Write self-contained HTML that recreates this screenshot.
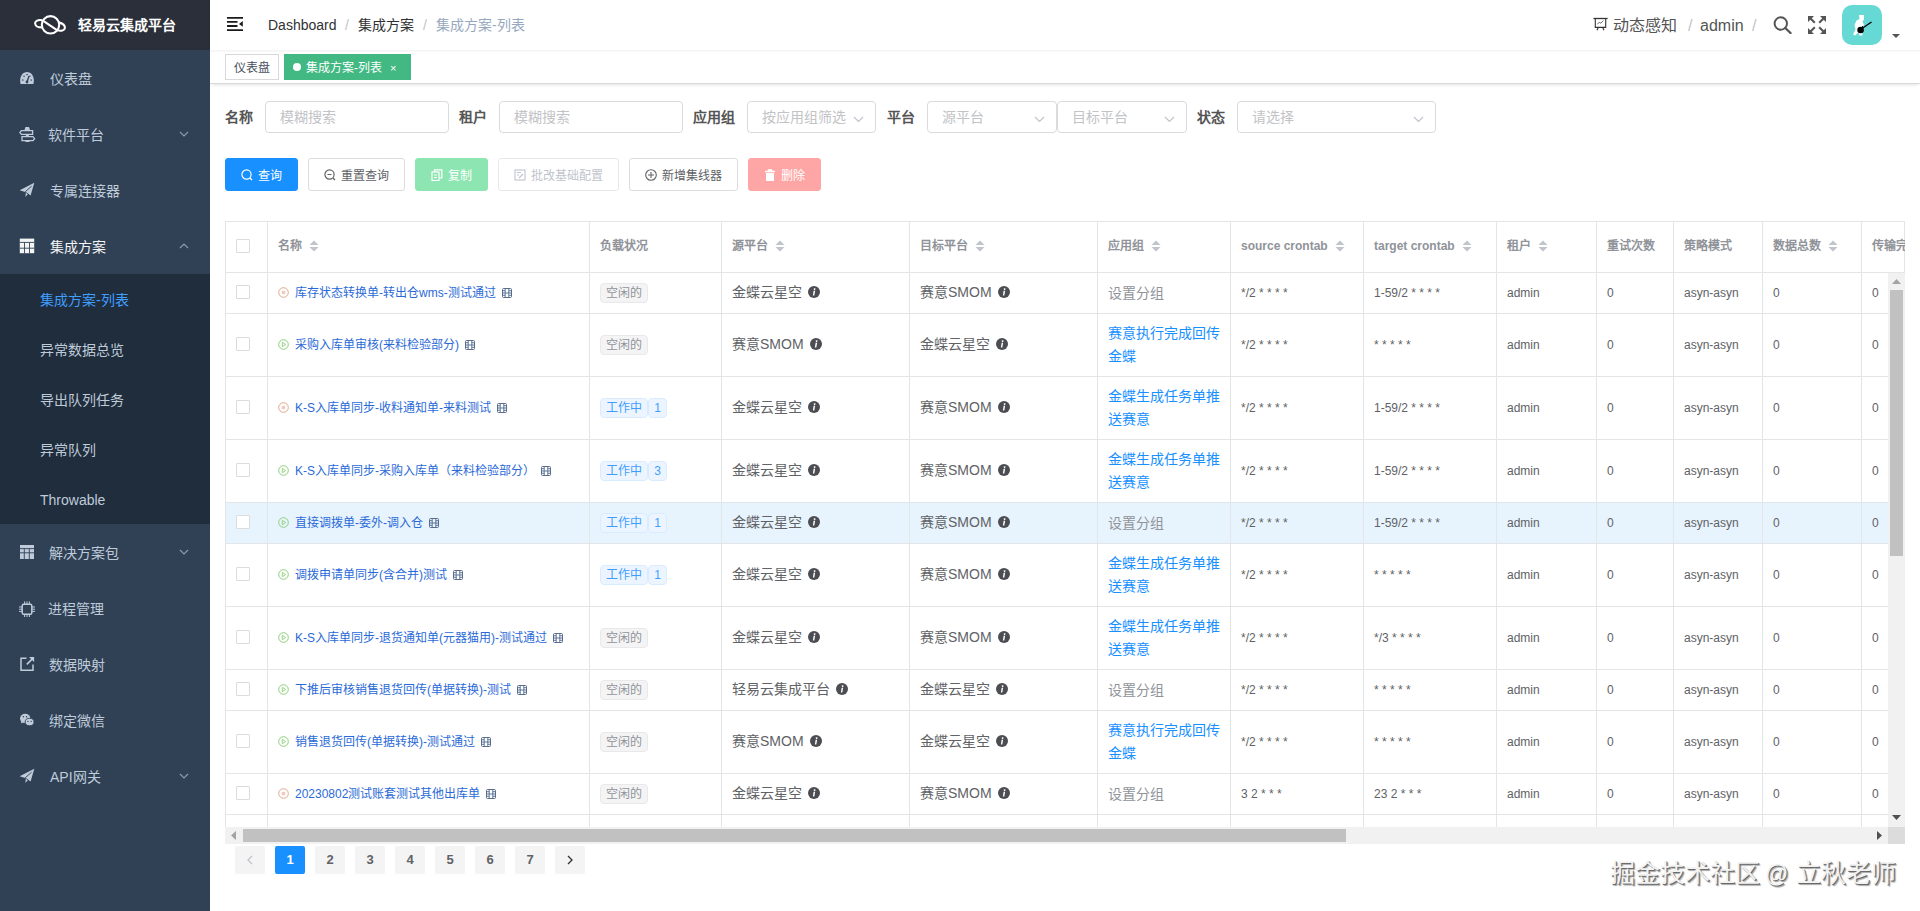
<!DOCTYPE html><html lang="zh-CN"><head><meta charset="utf-8"><title>集成方案-列表</title><style>
*{box-sizing:border-box;margin:0;padding:0}
html,body{width:1920px;height:911px;overflow:hidden;background:#fff;font-family:"Liberation Sans", sans-serif;}
.ab{position:absolute;white-space:nowrap}
.t{position:absolute;white-space:nowrap;line-height:20px;height:20px}
svg{display:block}
</style></head><body>
<div class="ab" style="left:0;top:0;width:210px;height:911px;background:#304156"></div>
<div class="ab" style="left:0;top:0;width:210px;height:50px;background:#2b2f3a"></div>
<svg class="ab" style="left:33px;top:13px" width="34" height="24" viewBox="0 0 34 24">
<circle cx="17.5" cy="11.8" r="8.7" fill="none" stroke="#fff" stroke-width="2.1"/>
<path d="M9.5 7.3 C5 6.3 1.9 8 2.1 10.5 C2.3 13 5.5 14.6 9.6 14.3 M25.4 9.4 C29.6 10.3 32.1 12.5 31.9 15 C31.7 17.6 28 18.3 24.4 17.3 M10.6 8.1 L24.4 17.4" fill="none" stroke="#fff" stroke-width="2.1"/>
</svg>
<div class="t" style="left:78px;top:15px;font-size:14px;font-weight:bold;color:#fff">轻易云集成平台</div>
<div class="ab" style="left:0;top:274px;width:210px;height:250px;background:#1f2d3d"></div>
<svg class="ab" style="left:19px;top:70px;overflow:visible" width="16" height="16" viewBox="0 0 16 16"><path d="M1.6 14 C0.4 9.5 1.5 2.2 8 2 C14.5 2.2 15.6 9.5 14.4 14 Z" fill="#bfcbd9"/><path d="M8 12.2 L10 6" stroke="#304156" stroke-width="1.3"/><circle cx="8" cy="12" r="1.4" fill="#304156"/><rect x="7.3" y="4" width="1.4" height="1.2" fill="#304156"/><rect x="3" y="9.5" width="1.5" height="1.1" fill="#304156"/><rect x="11.5" y="9.5" width="1.5" height="1.1" fill="#304156"/><rect x="4.5" y="5.6" width="1.1" height="1.4" fill="#304156"/><rect x="10.4" y="5.6" width="1.1" height="1.4" fill="#304156"/></svg>
<div class="t" style="left:50px;top:69px;font-size:14px;color:#bfcbd9">仪表盘</div>
<svg class="ab" style="left:19px;top:126px;overflow:visible" width="16" height="16" viewBox="0 0 16 16"><path d="M2.4 4.6 H13.6 V8.4 H2.4 L0.9 6.5 Z" fill="none" stroke="#bfcbd9" stroke-width="1.3"/><path d="M3 10.6 H14 L15.6 12.7 L14 14.7 H3 Z" fill="none" stroke="#bfcbd9" stroke-width="1.3"/><path d="M6.5 1 H10 L11 4 H5.5Z M6 14.8 H11 L10.2 16 H6.8Z" fill="#bfcbd9"/><rect x="6.8" y="8.4" width="3" height="2.2" fill="#bfcbd9"/></svg>
<div class="t" style="left:48px;top:125px;font-size:14px;color:#bfcbd9">软件平台</div>
<svg class="ab" style="left:179px;top:131px" width="10" height="6" viewBox="0 0 10 6"><path d="M1 1 L5 5 L9 1" fill="none" stroke="#8e99a9" stroke-width="1.2"/></svg>
<svg class="ab" style="left:19px;top:182px;overflow:visible" width="16" height="16" viewBox="0 0 16 16"><path d="M0.7 8.3 L15.3 0.8 L11.6 13.4 L7.6 10.6 Z" fill="#bfcbd9"/><path d="M6.8 10.8 L6.4 15 L8.8 12.2 Z" fill="#bfcbd9"/><path d="M6.2 9.8 L12.6 4.2" stroke="#304156" stroke-width="0.9"/></svg>
<div class="t" style="left:50px;top:181px;font-size:14px;color:#bfcbd9">专属连接器</div>
<svg class="ab" style="left:19px;top:238px;overflow:visible" width="16" height="16" viewBox="0 0 16 16"><rect x="0.8" y="0.6" width="14.4" height="14.6" fill="#f4f4f5"/><path d="M0.8 4.4 H15.2 M0.8 10.2 H15.2 M5.5 4.4 V15.2 M10.5 4.4 V15.2" stroke="#304156" stroke-width="0.9"/></svg>
<div class="t" style="left:50px;top:237px;font-size:14px;color:#f4f4f5">集成方案</div>
<svg class="ab" style="left:179px;top:243px" width="10" height="6" viewBox="0 0 10 6"><path d="M1 5 L5 1 L9 5" fill="none" stroke="#8e99a9" stroke-width="1.2"/></svg>
<svg class="ab" style="left:19px;top:544px;overflow:visible" width="16" height="16" viewBox="0 0 16 16"><rect x="1" y="1" width="14" height="14" fill="#bfcbd9"/><path d="M1 4.6 H15 M1 8.8 H15 M5.3 4.6 V15 M10.3 4.6 V15" stroke="#304156" stroke-width="0.9"/></svg>
<div class="t" style="left:49px;top:543px;font-size:14px;color:#bfcbd9">解决方案包</div>
<svg class="ab" style="left:179px;top:549px" width="10" height="6" viewBox="0 0 10 6"><path d="M1 1 L5 5 L9 1" fill="none" stroke="#8e99a9" stroke-width="1.2"/></svg>
<svg class="ab" style="left:19px;top:600px;overflow:visible" width="16" height="16" viewBox="0 0 16 16"><rect x="3.2" y="4.2" width="9.6" height="10" rx="1.5" fill="none" stroke="#bfcbd9" stroke-width="1.5"/><path d="M5.6 1.4V4 M8 1.4V4 M10.4 1.4V4 M5.6 14.4V17 M8 14.4V17 M10.4 14.4V17 M0 7H3 M0 9.2H3 M0 11.4H3 M13 7H16 M13 9.2H16 M13 11.4H16" stroke="#bfcbd9" stroke-width="1"/></svg>
<div class="t" style="left:48px;top:599px;font-size:14px;color:#bfcbd9">进程管理</div>
<svg class="ab" style="left:19px;top:656px;overflow:visible" width="16" height="16" viewBox="0 0 16 16"><path d="M7.5 2.2 H2 V14.2 H14 V8.5" fill="none" stroke="#bfcbd9" stroke-width="1.5"/><path d="M7.8 8.4 L13.8 2.4" stroke="#bfcbd9" stroke-width="1.6"/><path d="M10 1 H15.1 V6.1 Z" fill="#bfcbd9"/></svg>
<div class="t" style="left:49px;top:655px;font-size:14px;color:#bfcbd9">数据映射</div>
<svg class="ab" style="left:19px;top:712px;overflow:visible" width="16" height="16" viewBox="0 0 16 16"><ellipse cx="6.2" cy="6.4" rx="5.2" ry="4.6" fill="#bfcbd9"/><path d="M2.5 9 L1.8 11.5 L5 10Z" fill="#bfcbd9"/><ellipse cx="10.6" cy="10" rx="4.4" ry="3.7" fill="#bfcbd9" stroke="#304156" stroke-width="0.9"/><circle cx="4.4" cy="4.8" r="0.8" fill="#304156"/><circle cx="7.6" cy="4.8" r="0.8" fill="#304156"/><circle cx="9" cy="9.4" r="0.6" fill="#304156"/><circle cx="12.2" cy="9.4" r="0.6" fill="#304156"/></svg>
<div class="t" style="left:49px;top:711px;font-size:14px;color:#bfcbd9">绑定微信</div>
<svg class="ab" style="left:19px;top:768px;overflow:visible" width="16" height="16" viewBox="0 0 16 16"><path d="M0.7 8.3 L15.3 0.8 L11.6 13.4 L7.6 10.6 Z" fill="#bfcbd9"/><path d="M6.8 10.8 L6.4 15 L8.8 12.2 Z" fill="#bfcbd9"/><path d="M6.2 9.8 L12.6 4.2" stroke="#304156" stroke-width="0.9"/></svg>
<div class="t" style="left:50px;top:767px;font-size:14px;color:#bfcbd9">API网关</div>
<svg class="ab" style="left:179px;top:773px" width="10" height="6" viewBox="0 0 10 6"><path d="M1 1 L5 5 L9 1" fill="none" stroke="#8e99a9" stroke-width="1.2"/></svg>
<div class="t" style="left:40px;top:290px;font-size:14px;color:#409eff">集成方案-列表</div>
<div class="t" style="left:40px;top:340px;font-size:14px;color:#bfcbd9">异常数据总览</div>
<div class="t" style="left:40px;top:390px;font-size:14px;color:#bfcbd9">导出队列任务</div>
<div class="t" style="left:40px;top:440px;font-size:14px;color:#bfcbd9">异常队列</div>
<div class="t" style="left:40px;top:490px;font-size:14px;color:#bfcbd9">Throwable</div>
<div class="ab" style="left:210px;top:0;width:1710px;height:50px;background:#fff;box-shadow:0 1px 4px rgba(0,21,41,.08)"></div>
<svg class="ab" style="left:227px;top:17px" width="16" height="14" viewBox="0 0 16 14">
<path d="M0 0.9H15.8 M0.3 4.9H9.8 M0.3 9H9.8 M0 13.1H15.8" stroke="#1b1b1d" stroke-width="1.8" stroke-linecap="round"/><path d="M15.8 3.9 L12 6.9 L15.8 9.8 Z" fill="#1b1b1d"/></svg>
<div class="t" style="left:268px;top:15px;font-size:14px;color:#303133">Dashboard</div>
<div class="t" style="left:345px;top:15px;font-size:14px;color:#c0c4cc">/</div>
<div class="t" style="left:358px;top:15px;font-size:14px;color:#303133">集成方案</div>
<div class="t" style="left:423px;top:15px;font-size:14px;color:#c0c4cc">/</div>
<div class="t" style="left:436px;top:15px;font-size:14px;color:#97a8be">集成方案-列表</div>
<svg class="ab" style="left:1593px;top:17px" width="15" height="14" viewBox="0 0 15 14">
<path d="M0.4 1.5 H14.6" stroke="#333" stroke-width="1.3"/><path d="M2.3 1.5 V10.4 H12.7 V1.5" fill="none" stroke="#333" stroke-width="1.1"/><path d="M4.3 7 L6.3 5.4 L7.8 6.2 L10.4 3.6" fill="none" stroke="#555" stroke-width="0.9"/><path d="M5.3 10.4 L4 13.2 M9.7 10.4 L11 13.2" stroke="#333" stroke-width="1.1"/></svg>
<div class="t" style="left:1613px;top:16px;font-size:16px;color:#555">动态感知</div>
<div class="t" style="left:1688px;top:16px;font-size:16px;color:#c0c4cc">/</div>
<div class="t" style="left:1700px;top:16px;font-size:16px;color:#555">admin</div>
<div class="t" style="left:1752px;top:16px;font-size:16px;color:#c0c4cc">/</div>
<svg class="ab" style="left:1773px;top:16px" width="19" height="18" viewBox="0 0 19 18">
<circle cx="7.8" cy="7.5" r="6.2" fill="none" stroke="#555" stroke-width="2"/><path d="M12.3 12 L17.5 17" stroke="#555" stroke-width="2.4" stroke-linecap="round"/></svg>
<svg class="ab" style="left:1808px;top:16px" width="18" height="18" viewBox="0 0 18 18">
<path d="M0 0H6L0 6Z M18 0H12L18 6Z M0 18H6L0 12Z M18 18H12L18 12Z" fill="#555"/><path d="M1.5 1.5L6.8 6.8 M16.5 1.5L11.2 6.8 M1.5 16.5L6.8 11.2 M16.5 16.5L11.2 11.2" stroke="#555" stroke-width="2.1"/></svg>
<div class="ab" style="left:1842px;top:5px;width:40px;height:40px;border-radius:10px;background:#66d9d4;overflow:hidden"><svg width="40" height="40" viewBox="0 0 40 40"><path d="M17 10 H22 V14.5 L20.5 16.5 L22 20 L19.5 22 L20.5 30.5 L17.5 30.5 L16.5 27 L13.5 30.5 L11 29.5 L13.5 24.5 L12.5 20 L14.5 15.5 L17.5 14 Z" fill="#fff"/><circle cx="18.6" cy="25" r="3.3" fill="#000"/><path d="M20 23.5 L29.5 17" stroke="#000" stroke-width="1.3"/><circle cx="20.5" cy="21.5" r="0.6" fill="#000"/></svg></div>
<svg class="ab" style="left:1892px;top:34px" width="8" height="4" viewBox="0 0 8 4"><path d="M0 0H8L4 4Z" fill="#555"/></svg>
<div class="ab" style="left:210px;top:50px;width:1710px;height:34px;background:#fff;border-bottom:1px solid #d9d9d9;box-shadow:0 3px 3px -2px rgba(0,0,0,.12)"></div>
<div class="ab" style="left:210px;top:50px;width:1710px;height:2px;background:linear-gradient(#f3f3f3,#fbfbfb)"></div>
<div class="ab" style="left:225px;top:54px;width:54px;height:26px;border:1px solid #d9d9d9;background:#fff"></div>
<div class="t" style="left:234px;top:58px;font-size:12px;color:#495060">仪表盘</div>
<div class="ab" style="left:284px;top:54px;width:127px;height:26px;background:#42b983;border:1px solid #42b983"></div>
<div class="ab" style="left:293px;top:63px;width:8px;height:8px;border-radius:50%;background:#fff"></div>
<div class="t" style="left:306px;top:58px;font-size:12px;color:#fff">集成方案-列表</div>
<div class="t" style="left:390px;top:58px;font-size:11px;color:#fff">×</div>
<div class="t" style="left:225px;top:107px;font-size:14px;font-weight:bold;color:#555">名称</div>
<div class="ab" style="left:265px;top:101px;width:184px;height:32px;border:1px solid #dadbdd;border-radius:4px;background:#fff"></div>
<div class="t" style="left:280px;top:107px;font-size:14px;color:#c2c3c6">模糊搜索</div>
<div class="t" style="left:459px;top:107px;font-size:14px;font-weight:bold;color:#555">租户</div>
<div class="ab" style="left:499px;top:101px;width:184px;height:32px;border:1px solid #dadbdd;border-radius:4px;background:#fff"></div>
<div class="t" style="left:514px;top:107px;font-size:14px;color:#c2c3c6">模糊搜索</div>
<div class="t" style="left:693px;top:107px;font-size:14px;font-weight:bold;color:#555">应用组</div>
<div class="ab" style="left:747px;top:101px;width:129px;height:32px;border:1px solid #dadbdd;border-radius:4px;background:#fff"></div>
<div class="t" style="left:762px;top:107px;font-size:14px;color:#c2c3c6">按应用组筛选</div>
<svg class="ab" style="left:853px;top:116px" width="11" height="7" viewBox="0 0 11 7"><path d="M1 1 L5.5 5.5 L10 1" fill="none" stroke="#c0c4cc" stroke-width="1.2"/></svg>
<div class="t" style="left:887px;top:107px;font-size:14px;font-weight:bold;color:#555">平台</div>
<div class="ab" style="left:927px;top:101px;width:130px;height:32px;border:1px solid #dadbdd;border-radius:4px;background:#fff"></div>
<div class="t" style="left:942px;top:107px;font-size:14px;color:#c2c3c6">源平台</div>
<svg class="ab" style="left:1034px;top:116px" width="11" height="7" viewBox="0 0 11 7"><path d="M1 1 L5.5 5.5 L10 1" fill="none" stroke="#c0c4cc" stroke-width="1.2"/></svg>
<div class="ab" style="left:1057px;top:101px;width:130px;height:32px;border:1px solid #dadbdd;border-radius:4px;background:#fff"></div>
<div class="t" style="left:1072px;top:107px;font-size:14px;color:#c2c3c6">目标平台</div>
<svg class="ab" style="left:1164px;top:116px" width="11" height="7" viewBox="0 0 11 7"><path d="M1 1 L5.5 5.5 L10 1" fill="none" stroke="#c0c4cc" stroke-width="1.2"/></svg>
<div class="t" style="left:1197px;top:107px;font-size:14px;font-weight:bold;color:#555">状态</div>
<div class="ab" style="left:1237px;top:101px;width:199px;height:32px;border:1px solid #dadbdd;border-radius:4px;background:#fff"></div>
<div class="t" style="left:1252px;top:107px;font-size:14px;color:#c2c3c6">请选择</div>
<svg class="ab" style="left:1413px;top:116px" width="11" height="7" viewBox="0 0 11 7"><path d="M1 1 L5.5 5.5 L10 1" fill="none" stroke="#c0c4cc" stroke-width="1.2"/></svg>
<div class="ab" style="left:225px;top:158px;width:73px;height:33px;border:1px solid #1890ff;border-radius:3px;background:#1890ff"></div>
<div class="ab" style="left:225px;top:158px;width:73px;height:33px;display:flex;align-items:center;justify-content:center;font-size:12px;color:#fff"><svg width="12" height="12" viewBox="0 0 12 12"><circle cx="5.5" cy="5.5" r="4.6" fill="none" stroke="#fff" stroke-width="1.2"/><path d="M9 9 L11 11" stroke="#fff" stroke-width="1.2"/></svg><span style="margin-left:5px">查询</span></div>
<div class="ab" style="left:308px;top:158px;width:97px;height:33px;border:1px solid #dcdcdc;border-radius:3px;background:#fff"></div>
<div class="ab" style="left:308px;top:158px;width:97px;height:33px;display:flex;align-items:center;justify-content:center;font-size:12px;color:#606266"><svg width="12" height="12" viewBox="0 0 12 12"><circle cx="5.5" cy="5.5" r="4.6" fill="none" stroke="#606266" stroke-width="1.2"/><path d="M9 9 L11 11 M3.5 5.5H7.5" stroke="#606266" stroke-width="1.2"/></svg><span style="margin-left:5px">重置查询</span></div>
<div class="ab" style="left:415px;top:158px;width:73px;height:33px;border:1px solid #8de6b1;border-radius:3px;background:#8de6b1"></div>
<div class="ab" style="left:415px;top:158px;width:73px;height:33px;display:flex;align-items:center;justify-content:center;font-size:12px;color:#fff"><svg width="12" height="12" viewBox="0 0 12 12"><rect x="1" y="3" width="7" height="8.5" fill="none" stroke="#fff" stroke-width="1.2"/><path d="M3.5 3V0.8H10.8V9H8 M3 6H6 M3 8.5H6" fill="none" stroke="#fff" stroke-width="1.2"/></svg><span style="margin-left:5px">复制</span></div>
<div class="ab" style="left:498px;top:158px;width:121px;height:33px;border:1px solid #e8e8e8;border-radius:3px;background:#fff"></div>
<div class="ab" style="left:498px;top:158px;width:121px;height:33px;display:flex;align-items:center;justify-content:center;font-size:12px;color:#c0c4cc"><svg width="12" height="12" viewBox="0 0 12 12"><rect x="1" y="1" width="10" height="10" fill="none" stroke="#c0c4cc" stroke-width="1.1"/><path d="M3 3.5H7 M3 6H5 M5 9 L9 5" fill="none" stroke="#c0c4cc" stroke-width="1.1"/></svg><span style="margin-left:5px">批改基础配置</span></div>
<div class="ab" style="left:629px;top:158px;width:109px;height:33px;border:1px solid #dcdcdc;border-radius:3px;background:#fff"></div>
<div class="ab" style="left:629px;top:158px;width:109px;height:33px;display:flex;align-items:center;justify-content:center;font-size:12px;color:#606266"><svg width="12" height="12" viewBox="0 0 12 12"><circle cx="6" cy="6" r="5.3" fill="none" stroke="#606266" stroke-width="1.1"/><path d="M3 6H9 M6 3V9" stroke="#606266" stroke-width="1.1"/></svg><span style="margin-left:5px">新增集线器</span></div>
<div class="ab" style="left:748px;top:158px;width:73px;height:33px;border:1px solid #fea6a5;border-radius:3px;background:#fea6a5"></div>
<div class="ab" style="left:748px;top:158px;width:73px;height:33px;display:flex;align-items:center;justify-content:center;font-size:12px;color:#fff"><svg width="12" height="12" viewBox="0 0 12 12"><path d="M1 2.5H11 M4.5 2.5V1H7.5V2.5" fill="none" stroke="#fff" stroke-width="1.3"/><rect x="2" y="4" width="8" height="8" fill="#fff"/></svg><span style="margin-left:5px">删除</span></div>
<div class="ab" style="left:225px;top:221px;width:1680px;height:606px;overflow:hidden">
<div class="ab" style="left:0;top:281px;width:1663px;height:41px;background:#e8f4fd"></div>
<div class="ab" style="left:0;top:0px;width:1680px;height:1px;background:#e3e6e8"></div>
<div class="ab" style="left:0;top:51px;width:1680px;height:1px;background:#e3e6e8"></div>
<div class="ab" style="left:0;top:92px;width:1680px;height:1px;background:#e3e6e8"></div>
<div class="ab" style="left:0;top:155px;width:1680px;height:1px;background:#e3e6e8"></div>
<div class="ab" style="left:0;top:218px;width:1680px;height:1px;background:#e3e6e8"></div>
<div class="ab" style="left:0;top:281px;width:1680px;height:1px;background:#e3e6e8"></div>
<div class="ab" style="left:0;top:322px;width:1680px;height:1px;background:#e3e6e8"></div>
<div class="ab" style="left:0;top:385px;width:1680px;height:1px;background:#e3e6e8"></div>
<div class="ab" style="left:0;top:448px;width:1680px;height:1px;background:#e3e6e8"></div>
<div class="ab" style="left:0;top:489px;width:1680px;height:1px;background:#e3e6e8"></div>
<div class="ab" style="left:0;top:552px;width:1680px;height:1px;background:#e3e6e8"></div>
<div class="ab" style="left:0;top:593px;width:1680px;height:1px;background:#e3e6e8"></div>
<div class="ab" style="left:0px;top:0;width:1px;height:606px;background:#e3e6e8"></div>
<div class="ab" style="left:42px;top:0;width:1px;height:606px;background:#e3e6e8"></div>
<div class="ab" style="left:364px;top:0;width:1px;height:606px;background:#e3e6e8"></div>
<div class="ab" style="left:496px;top:0;width:1px;height:606px;background:#e3e6e8"></div>
<div class="ab" style="left:684px;top:0;width:1px;height:606px;background:#e3e6e8"></div>
<div class="ab" style="left:872px;top:0;width:1px;height:606px;background:#e3e6e8"></div>
<div class="ab" style="left:1005px;top:0;width:1px;height:606px;background:#e3e6e8"></div>
<div class="ab" style="left:1138px;top:0;width:1px;height:606px;background:#e3e6e8"></div>
<div class="ab" style="left:1271px;top:0;width:1px;height:606px;background:#e3e6e8"></div>
<div class="ab" style="left:1371px;top:0;width:1px;height:606px;background:#e3e6e8"></div>
<div class="ab" style="left:1448px;top:0;width:1px;height:606px;background:#e3e6e8"></div>
<div class="ab" style="left:1537px;top:0;width:1px;height:606px;background:#e3e6e8"></div>
<div class="ab" style="left:1636px;top:0;width:1px;height:606px;background:#e3e6e8"></div>
<div class="ab" style="left:1679px;top:0;width:1px;height:51px;background:#e3e6e8"></div>
<div class="t" style="left:53px;top:15px;font-size:12px;font-weight:bold;color:#909399"><span id="h278">名称</span></div>
<div class="t" style="left:375px;top:15px;font-size:12px;font-weight:bold;color:#909399"><span id="h600">负载状况</span></div>
<div class="t" style="left:507px;top:15px;font-size:12px;font-weight:bold;color:#909399"><span id="h732">源平台</span></div>
<div class="t" style="left:695px;top:15px;font-size:12px;font-weight:bold;color:#909399"><span id="h920">目标平台</span></div>
<div class="t" style="left:883px;top:15px;font-size:12px;font-weight:bold;color:#909399"><span id="h1108">应用组</span></div>
<div class="t" style="left:1016px;top:15px;font-size:12px;font-weight:bold;color:#909399"><span id="h1241">source crontab</span></div>
<div class="t" style="left:1149px;top:15px;font-size:12px;font-weight:bold;color:#909399"><span id="h1374">target crontab</span></div>
<div class="t" style="left:1282px;top:15px;font-size:12px;font-weight:bold;color:#909399"><span id="h1507">租户</span></div>
<div class="t" style="left:1382px;top:15px;font-size:12px;font-weight:bold;color:#909399"><span id="h1607">重试次数</span></div>
<div class="t" style="left:1459px;top:15px;font-size:12px;font-weight:bold;color:#909399"><span id="h1684">策略模式</span></div>
<div class="t" style="left:1548px;top:15px;font-size:12px;font-weight:bold;color:#909399"><span id="h1773">数据总数</span></div>
<div class="t" style="left:1647px;top:15px;font-size:12px;font-weight:bold;color:#909399"><span id="h1872">传输完成</span></div>
<div class="ab" style="left:11px;top:18px;width:14px;height:14px;border:1px solid #dcdcdc;border-radius:1px;background:#fff"></div>
<div class="ab" style="left:11px;top:64px;width:14px;height:14px;border:1px solid #dcdcdc;border-radius:1px;background:#fff"></div>
<div class="t" style="left:53px;top:61.5px;font-size:12px;color:#2a6ad8"><svg width="11" height="11" viewBox="0 0 11 11" style="display:inline-block;vertical-align:-1px;margin-right:6px"><circle cx="5.5" cy="5.5" r="4.8" fill="none" stroke="#e0a78a" stroke-width="1"/><rect x="3.8" y="3.9" width="3.4" height="3.2" fill="#f4c6bf"/></svg>库存状态转换单-转出仓wms-测试通过<svg width="10" height="10" viewBox="0 0 10 10" style="display:inline-block;vertical-align:-1px;margin-left:6px"><rect x="0.5" y="0.5" width="9" height="9" rx="1" fill="none" stroke="#5c6c8a" stroke-width="1"/><path d="M3.2 0.5V9.5 M6.8 0.5V9.5 M0.5 5H9.5 M0.5 2.7H3.2 M0.5 7.3H3.2 M6.8 2.7H9.5 M6.8 7.3H9.5" stroke="#4f6a90" stroke-width="0.9"/></svg></div>
<div class="ab" style="left:375px;top:61.5px;width:48px;height:20px;border:1px solid #e9e9eb;border-radius:4px;background:#f4f4f5;color:#909399;font-size:12px;line-height:18px;padding-left:5px">空闲的</div>
<div class="t" style="left:507px;top:60.5px;font-size:14px;color:#606266">金蝶云星空<svg width="12" height="12" viewBox="0 0 12 12" style="display:inline-block;vertical-align:-1px;margin-left:6px"><circle cx="6" cy="6" r="6" fill="#4b4d52"/><path d="M6.6 2.2 a0.9 0.9 0 1 0 0.01 0Z" fill="#fff"/><path d="M5.6 4.8 H7.2 L6.3 9.6 H4.9Z" fill="#fff"/></svg></div>
<div class="t" style="left:695px;top:60.5px;font-size:14px;color:#606266">赛意SMOM<svg width="12" height="12" viewBox="0 0 12 12" style="display:inline-block;vertical-align:-1px;margin-left:6px"><circle cx="6" cy="6" r="6" fill="#4b4d52"/><path d="M6.6 2.2 a0.9 0.9 0 1 0 0.01 0Z" fill="#fff"/><path d="M5.6 4.8 H7.2 L6.3 9.6 H4.9Z" fill="#fff"/></svg></div>
<div class="t" style="left:883px;top:61.5px;font-size:14px;color:#909399">设置分组</div>
<div class="t" style="left:1016px;top:61.5px;font-size:12px;color:#606266">*/2 * * * *</div>
<div class="t" style="left:1149px;top:61.5px;font-size:12px;color:#606266">1-59/2 * * * *</div>
<div class="t" style="left:1282px;top:61.5px;font-size:12px;color:#606266">admin</div>
<div class="t" style="left:1382px;top:61.5px;font-size:12px;color:#606266">0</div>
<div class="t" style="left:1459px;top:61.5px;font-size:12px;color:#606266">asyn-asyn</div>
<div class="t" style="left:1548px;top:61.5px;font-size:12px;color:#606266">0</div>
<div class="t" style="left:1647px;top:61.5px;font-size:12px;color:#606266">0</div>
<div class="ab" style="left:11px;top:116px;width:14px;height:14px;border:1px solid #dcdcdc;border-radius:1px;background:#fff"></div>
<div class="t" style="left:53px;top:113.5px;font-size:12px;color:#2a6ad8"><svg width="11" height="11" viewBox="0 0 11 11" style="display:inline-block;vertical-align:-1px;margin-right:6px"><circle cx="5.5" cy="5.5" r="4.8" fill="none" stroke="#8ccf7a" stroke-width="1"/><path d="M4.3 3.3 L7.7 5.5 L4.3 7.7Z" fill="none" stroke="#8ccf7a" stroke-width="0.9"/></svg>采购入库单审核(来料检验部分)<svg width="10" height="10" viewBox="0 0 10 10" style="display:inline-block;vertical-align:-1px;margin-left:6px"><rect x="0.5" y="0.5" width="9" height="9" rx="1" fill="none" stroke="#5c6c8a" stroke-width="1"/><path d="M3.2 0.5V9.5 M6.8 0.5V9.5 M0.5 5H9.5 M0.5 2.7H3.2 M0.5 7.3H3.2 M6.8 2.7H9.5 M6.8 7.3H9.5" stroke="#4f6a90" stroke-width="0.9"/></svg></div>
<div class="ab" style="left:375px;top:113.5px;width:48px;height:20px;border:1px solid #e9e9eb;border-radius:4px;background:#f4f4f5;color:#909399;font-size:12px;line-height:18px;padding-left:5px">空闲的</div>
<div class="t" style="left:507px;top:112.5px;font-size:14px;color:#606266">赛意SMOM<svg width="12" height="12" viewBox="0 0 12 12" style="display:inline-block;vertical-align:-1px;margin-left:6px"><circle cx="6" cy="6" r="6" fill="#4b4d52"/><path d="M6.6 2.2 a0.9 0.9 0 1 0 0.01 0Z" fill="#fff"/><path d="M5.6 4.8 H7.2 L6.3 9.6 H4.9Z" fill="#fff"/></svg></div>
<div class="t" style="left:695px;top:112.5px;font-size:14px;color:#606266">金蝶云星空<svg width="12" height="12" viewBox="0 0 12 12" style="display:inline-block;vertical-align:-1px;margin-left:6px"><circle cx="6" cy="6" r="6" fill="#4b4d52"/><path d="M6.6 2.2 a0.9 0.9 0 1 0 0.01 0Z" fill="#fff"/><path d="M5.6 4.8 H7.2 L6.3 9.6 H4.9Z" fill="#fff"/></svg></div>
<div class="ab" style="left:883px;top:100.5px;font-size:14px;line-height:23px;color:#1890ff;white-space:nowrap">赛意执行完成回传<br>金蝶</div>
<div class="t" style="left:1016px;top:113.5px;font-size:12px;color:#606266">*/2 * * * *</div>
<div class="t" style="left:1149px;top:113.5px;font-size:12px;color:#606266">* * * * *</div>
<div class="t" style="left:1282px;top:113.5px;font-size:12px;color:#606266">admin</div>
<div class="t" style="left:1382px;top:113.5px;font-size:12px;color:#606266">0</div>
<div class="t" style="left:1459px;top:113.5px;font-size:12px;color:#606266">asyn-asyn</div>
<div class="t" style="left:1548px;top:113.5px;font-size:12px;color:#606266">0</div>
<div class="t" style="left:1647px;top:113.5px;font-size:12px;color:#606266">0</div>
<div class="ab" style="left:11px;top:179px;width:14px;height:14px;border:1px solid #dcdcdc;border-radius:1px;background:#fff"></div>
<div class="t" style="left:53px;top:176.5px;font-size:12px;color:#2a6ad8"><svg width="11" height="11" viewBox="0 0 11 11" style="display:inline-block;vertical-align:-1px;margin-right:6px"><circle cx="5.5" cy="5.5" r="4.8" fill="none" stroke="#e0a78a" stroke-width="1"/><rect x="3.8" y="3.9" width="3.4" height="3.2" fill="#f4c6bf"/></svg>K-S入库单同步-收料通知单-来料测试<svg width="10" height="10" viewBox="0 0 10 10" style="display:inline-block;vertical-align:-1px;margin-left:6px"><rect x="0.5" y="0.5" width="9" height="9" rx="1" fill="none" stroke="#5c6c8a" stroke-width="1"/><path d="M3.2 0.5V9.5 M6.8 0.5V9.5 M0.5 5H9.5 M0.5 2.7H3.2 M0.5 7.3H3.2 M6.8 2.7H9.5 M6.8 7.3H9.5" stroke="#4f6a90" stroke-width="0.9"/></svg></div>
<div class="ab" style="left:375px;top:176.5px;width:48px;height:20px;border:1px solid #d9ecff;border-radius:4px;background:#ecf5ff;color:#409eff;font-size:12px;line-height:18px;padding-left:5px">工作中</div>
<div class="ab" style="left:423px;top:176.5px;width:19px;height:20px;border:1px solid #d9ecff;border-radius:4px;background:#ecf5ff;color:#409eff;font-size:12px;line-height:18px;text-align:center">1</div>
<div class="t" style="left:507px;top:175.5px;font-size:14px;color:#606266">金蝶云星空<svg width="12" height="12" viewBox="0 0 12 12" style="display:inline-block;vertical-align:-1px;margin-left:6px"><circle cx="6" cy="6" r="6" fill="#4b4d52"/><path d="M6.6 2.2 a0.9 0.9 0 1 0 0.01 0Z" fill="#fff"/><path d="M5.6 4.8 H7.2 L6.3 9.6 H4.9Z" fill="#fff"/></svg></div>
<div class="t" style="left:695px;top:175.5px;font-size:14px;color:#606266">赛意SMOM<svg width="12" height="12" viewBox="0 0 12 12" style="display:inline-block;vertical-align:-1px;margin-left:6px"><circle cx="6" cy="6" r="6" fill="#4b4d52"/><path d="M6.6 2.2 a0.9 0.9 0 1 0 0.01 0Z" fill="#fff"/><path d="M5.6 4.8 H7.2 L6.3 9.6 H4.9Z" fill="#fff"/></svg></div>
<div class="ab" style="left:883px;top:163.5px;font-size:14px;line-height:23px;color:#1890ff;white-space:nowrap">金蝶生成任务单推<br>送赛意</div>
<div class="t" style="left:1016px;top:176.5px;font-size:12px;color:#606266">*/2 * * * *</div>
<div class="t" style="left:1149px;top:176.5px;font-size:12px;color:#606266">1-59/2 * * * *</div>
<div class="t" style="left:1282px;top:176.5px;font-size:12px;color:#606266">admin</div>
<div class="t" style="left:1382px;top:176.5px;font-size:12px;color:#606266">0</div>
<div class="t" style="left:1459px;top:176.5px;font-size:12px;color:#606266">asyn-asyn</div>
<div class="t" style="left:1548px;top:176.5px;font-size:12px;color:#606266">0</div>
<div class="t" style="left:1647px;top:176.5px;font-size:12px;color:#606266">0</div>
<div class="ab" style="left:11px;top:242px;width:14px;height:14px;border:1px solid #dcdcdc;border-radius:1px;background:#fff"></div>
<div class="t" style="left:53px;top:239.5px;font-size:12px;color:#2a6ad8"><svg width="11" height="11" viewBox="0 0 11 11" style="display:inline-block;vertical-align:-1px;margin-right:6px"><circle cx="5.5" cy="5.5" r="4.8" fill="none" stroke="#8ccf7a" stroke-width="1"/><path d="M4.3 3.3 L7.7 5.5 L4.3 7.7Z" fill="none" stroke="#8ccf7a" stroke-width="0.9"/></svg>K-S入库单同步-采购入库单（来料检验部分）<svg width="10" height="10" viewBox="0 0 10 10" style="display:inline-block;vertical-align:-1px;margin-left:6px"><rect x="0.5" y="0.5" width="9" height="9" rx="1" fill="none" stroke="#5c6c8a" stroke-width="1"/><path d="M3.2 0.5V9.5 M6.8 0.5V9.5 M0.5 5H9.5 M0.5 2.7H3.2 M0.5 7.3H3.2 M6.8 2.7H9.5 M6.8 7.3H9.5" stroke="#4f6a90" stroke-width="0.9"/></svg></div>
<div class="ab" style="left:375px;top:239.5px;width:48px;height:20px;border:1px solid #d9ecff;border-radius:4px;background:#ecf5ff;color:#409eff;font-size:12px;line-height:18px;padding-left:5px">工作中</div>
<div class="ab" style="left:423px;top:239.5px;width:19px;height:20px;border:1px solid #d9ecff;border-radius:4px;background:#ecf5ff;color:#409eff;font-size:12px;line-height:18px;text-align:center">3</div>
<div class="t" style="left:507px;top:238.5px;font-size:14px;color:#606266">金蝶云星空<svg width="12" height="12" viewBox="0 0 12 12" style="display:inline-block;vertical-align:-1px;margin-left:6px"><circle cx="6" cy="6" r="6" fill="#4b4d52"/><path d="M6.6 2.2 a0.9 0.9 0 1 0 0.01 0Z" fill="#fff"/><path d="M5.6 4.8 H7.2 L6.3 9.6 H4.9Z" fill="#fff"/></svg></div>
<div class="t" style="left:695px;top:238.5px;font-size:14px;color:#606266">赛意SMOM<svg width="12" height="12" viewBox="0 0 12 12" style="display:inline-block;vertical-align:-1px;margin-left:6px"><circle cx="6" cy="6" r="6" fill="#4b4d52"/><path d="M6.6 2.2 a0.9 0.9 0 1 0 0.01 0Z" fill="#fff"/><path d="M5.6 4.8 H7.2 L6.3 9.6 H4.9Z" fill="#fff"/></svg></div>
<div class="ab" style="left:883px;top:226.5px;font-size:14px;line-height:23px;color:#1890ff;white-space:nowrap">金蝶生成任务单推<br>送赛意</div>
<div class="t" style="left:1016px;top:239.5px;font-size:12px;color:#606266">*/2 * * * *</div>
<div class="t" style="left:1149px;top:239.5px;font-size:12px;color:#606266">1-59/2 * * * *</div>
<div class="t" style="left:1282px;top:239.5px;font-size:12px;color:#606266">admin</div>
<div class="t" style="left:1382px;top:239.5px;font-size:12px;color:#606266">0</div>
<div class="t" style="left:1459px;top:239.5px;font-size:12px;color:#606266">asyn-asyn</div>
<div class="t" style="left:1548px;top:239.5px;font-size:12px;color:#606266">0</div>
<div class="t" style="left:1647px;top:239.5px;font-size:12px;color:#606266">0</div>
<div class="ab" style="left:11px;top:294px;width:14px;height:14px;border:1px solid #dcdcdc;border-radius:1px;background:#fff"></div>
<div class="t" style="left:53px;top:291.5px;font-size:12px;color:#2a6ad8"><svg width="11" height="11" viewBox="0 0 11 11" style="display:inline-block;vertical-align:-1px;margin-right:6px"><circle cx="5.5" cy="5.5" r="4.8" fill="none" stroke="#8ccf7a" stroke-width="1"/><path d="M4.3 3.3 L7.7 5.5 L4.3 7.7Z" fill="none" stroke="#8ccf7a" stroke-width="0.9"/></svg>直接调拨单-委外-调入仓<svg width="10" height="10" viewBox="0 0 10 10" style="display:inline-block;vertical-align:-1px;margin-left:6px"><rect x="0.5" y="0.5" width="9" height="9" rx="1" fill="none" stroke="#5c6c8a" stroke-width="1"/><path d="M3.2 0.5V9.5 M6.8 0.5V9.5 M0.5 5H9.5 M0.5 2.7H3.2 M0.5 7.3H3.2 M6.8 2.7H9.5 M6.8 7.3H9.5" stroke="#4f6a90" stroke-width="0.9"/></svg></div>
<div class="ab" style="left:375px;top:291.5px;width:48px;height:20px;border:1px solid #d9ecff;border-radius:4px;background:#ecf5ff;color:#409eff;font-size:12px;line-height:18px;padding-left:5px">工作中</div>
<div class="ab" style="left:423px;top:291.5px;width:19px;height:20px;border:1px solid #d9ecff;border-radius:4px;background:#ecf5ff;color:#409eff;font-size:12px;line-height:18px;text-align:center">1</div>
<div class="t" style="left:507px;top:290.5px;font-size:14px;color:#606266">金蝶云星空<svg width="12" height="12" viewBox="0 0 12 12" style="display:inline-block;vertical-align:-1px;margin-left:6px"><circle cx="6" cy="6" r="6" fill="#4b4d52"/><path d="M6.6 2.2 a0.9 0.9 0 1 0 0.01 0Z" fill="#fff"/><path d="M5.6 4.8 H7.2 L6.3 9.6 H4.9Z" fill="#fff"/></svg></div>
<div class="t" style="left:695px;top:290.5px;font-size:14px;color:#606266">赛意SMOM<svg width="12" height="12" viewBox="0 0 12 12" style="display:inline-block;vertical-align:-1px;margin-left:6px"><circle cx="6" cy="6" r="6" fill="#4b4d52"/><path d="M6.6 2.2 a0.9 0.9 0 1 0 0.01 0Z" fill="#fff"/><path d="M5.6 4.8 H7.2 L6.3 9.6 H4.9Z" fill="#fff"/></svg></div>
<div class="t" style="left:883px;top:291.5px;font-size:14px;color:#909399">设置分组</div>
<div class="t" style="left:1016px;top:291.5px;font-size:12px;color:#606266">*/2 * * * *</div>
<div class="t" style="left:1149px;top:291.5px;font-size:12px;color:#606266">1-59/2 * * * *</div>
<div class="t" style="left:1282px;top:291.5px;font-size:12px;color:#606266">admin</div>
<div class="t" style="left:1382px;top:291.5px;font-size:12px;color:#606266">0</div>
<div class="t" style="left:1459px;top:291.5px;font-size:12px;color:#606266">asyn-asyn</div>
<div class="t" style="left:1548px;top:291.5px;font-size:12px;color:#606266">0</div>
<div class="t" style="left:1647px;top:291.5px;font-size:12px;color:#606266">0</div>
<div class="ab" style="left:11px;top:346px;width:14px;height:14px;border:1px solid #dcdcdc;border-radius:1px;background:#fff"></div>
<div class="t" style="left:53px;top:343.5px;font-size:12px;color:#2a6ad8"><svg width="11" height="11" viewBox="0 0 11 11" style="display:inline-block;vertical-align:-1px;margin-right:6px"><circle cx="5.5" cy="5.5" r="4.8" fill="none" stroke="#8ccf7a" stroke-width="1"/><path d="M4.3 3.3 L7.7 5.5 L4.3 7.7Z" fill="none" stroke="#8ccf7a" stroke-width="0.9"/></svg>调拨申请单同步(含合并)测试<svg width="10" height="10" viewBox="0 0 10 10" style="display:inline-block;vertical-align:-1px;margin-left:6px"><rect x="0.5" y="0.5" width="9" height="9" rx="1" fill="none" stroke="#5c6c8a" stroke-width="1"/><path d="M3.2 0.5V9.5 M6.8 0.5V9.5 M0.5 5H9.5 M0.5 2.7H3.2 M0.5 7.3H3.2 M6.8 2.7H9.5 M6.8 7.3H9.5" stroke="#4f6a90" stroke-width="0.9"/></svg></div>
<div class="ab" style="left:375px;top:343.5px;width:48px;height:20px;border:1px solid #d9ecff;border-radius:4px;background:#ecf5ff;color:#409eff;font-size:12px;line-height:18px;padding-left:5px">工作中</div>
<div class="ab" style="left:423px;top:343.5px;width:19px;height:20px;border:1px solid #d9ecff;border-radius:4px;background:#ecf5ff;color:#409eff;font-size:12px;line-height:18px;text-align:center">1</div>
<div class="t" style="left:507px;top:342.5px;font-size:14px;color:#606266">金蝶云星空<svg width="12" height="12" viewBox="0 0 12 12" style="display:inline-block;vertical-align:-1px;margin-left:6px"><circle cx="6" cy="6" r="6" fill="#4b4d52"/><path d="M6.6 2.2 a0.9 0.9 0 1 0 0.01 0Z" fill="#fff"/><path d="M5.6 4.8 H7.2 L6.3 9.6 H4.9Z" fill="#fff"/></svg></div>
<div class="t" style="left:695px;top:342.5px;font-size:14px;color:#606266">赛意SMOM<svg width="12" height="12" viewBox="0 0 12 12" style="display:inline-block;vertical-align:-1px;margin-left:6px"><circle cx="6" cy="6" r="6" fill="#4b4d52"/><path d="M6.6 2.2 a0.9 0.9 0 1 0 0.01 0Z" fill="#fff"/><path d="M5.6 4.8 H7.2 L6.3 9.6 H4.9Z" fill="#fff"/></svg></div>
<div class="ab" style="left:883px;top:330.5px;font-size:14px;line-height:23px;color:#1890ff;white-space:nowrap">金蝶生成任务单推<br>送赛意</div>
<div class="t" style="left:1016px;top:343.5px;font-size:12px;color:#606266">*/2 * * * *</div>
<div class="t" style="left:1149px;top:343.5px;font-size:12px;color:#606266">* * * * *</div>
<div class="t" style="left:1282px;top:343.5px;font-size:12px;color:#606266">admin</div>
<div class="t" style="left:1382px;top:343.5px;font-size:12px;color:#606266">0</div>
<div class="t" style="left:1459px;top:343.5px;font-size:12px;color:#606266">asyn-asyn</div>
<div class="t" style="left:1548px;top:343.5px;font-size:12px;color:#606266">0</div>
<div class="t" style="left:1647px;top:343.5px;font-size:12px;color:#606266">0</div>
<div class="ab" style="left:11px;top:409px;width:14px;height:14px;border:1px solid #dcdcdc;border-radius:1px;background:#fff"></div>
<div class="t" style="left:53px;top:406.5px;font-size:12px;color:#2a6ad8"><svg width="11" height="11" viewBox="0 0 11 11" style="display:inline-block;vertical-align:-1px;margin-right:6px"><circle cx="5.5" cy="5.5" r="4.8" fill="none" stroke="#8ccf7a" stroke-width="1"/><path d="M4.3 3.3 L7.7 5.5 L4.3 7.7Z" fill="none" stroke="#8ccf7a" stroke-width="0.9"/></svg>K-S入库单同步-退货通知单(元器猫用)-测试通过<svg width="10" height="10" viewBox="0 0 10 10" style="display:inline-block;vertical-align:-1px;margin-left:6px"><rect x="0.5" y="0.5" width="9" height="9" rx="1" fill="none" stroke="#5c6c8a" stroke-width="1"/><path d="M3.2 0.5V9.5 M6.8 0.5V9.5 M0.5 5H9.5 M0.5 2.7H3.2 M0.5 7.3H3.2 M6.8 2.7H9.5 M6.8 7.3H9.5" stroke="#4f6a90" stroke-width="0.9"/></svg></div>
<div class="ab" style="left:375px;top:406.5px;width:48px;height:20px;border:1px solid #e9e9eb;border-radius:4px;background:#f4f4f5;color:#909399;font-size:12px;line-height:18px;padding-left:5px">空闲的</div>
<div class="t" style="left:507px;top:405.5px;font-size:14px;color:#606266">金蝶云星空<svg width="12" height="12" viewBox="0 0 12 12" style="display:inline-block;vertical-align:-1px;margin-left:6px"><circle cx="6" cy="6" r="6" fill="#4b4d52"/><path d="M6.6 2.2 a0.9 0.9 0 1 0 0.01 0Z" fill="#fff"/><path d="M5.6 4.8 H7.2 L6.3 9.6 H4.9Z" fill="#fff"/></svg></div>
<div class="t" style="left:695px;top:405.5px;font-size:14px;color:#606266">赛意SMOM<svg width="12" height="12" viewBox="0 0 12 12" style="display:inline-block;vertical-align:-1px;margin-left:6px"><circle cx="6" cy="6" r="6" fill="#4b4d52"/><path d="M6.6 2.2 a0.9 0.9 0 1 0 0.01 0Z" fill="#fff"/><path d="M5.6 4.8 H7.2 L6.3 9.6 H4.9Z" fill="#fff"/></svg></div>
<div class="ab" style="left:883px;top:393.5px;font-size:14px;line-height:23px;color:#1890ff;white-space:nowrap">金蝶生成任务单推<br>送赛意</div>
<div class="t" style="left:1016px;top:406.5px;font-size:12px;color:#606266">*/2 * * * *</div>
<div class="t" style="left:1149px;top:406.5px;font-size:12px;color:#606266">*/3 * * * *</div>
<div class="t" style="left:1282px;top:406.5px;font-size:12px;color:#606266">admin</div>
<div class="t" style="left:1382px;top:406.5px;font-size:12px;color:#606266">0</div>
<div class="t" style="left:1459px;top:406.5px;font-size:12px;color:#606266">asyn-asyn</div>
<div class="t" style="left:1548px;top:406.5px;font-size:12px;color:#606266">0</div>
<div class="t" style="left:1647px;top:406.5px;font-size:12px;color:#606266">0</div>
<div class="ab" style="left:11px;top:461px;width:14px;height:14px;border:1px solid #dcdcdc;border-radius:1px;background:#fff"></div>
<div class="t" style="left:53px;top:458.5px;font-size:12px;color:#2a6ad8"><svg width="11" height="11" viewBox="0 0 11 11" style="display:inline-block;vertical-align:-1px;margin-right:6px"><circle cx="5.5" cy="5.5" r="4.8" fill="none" stroke="#8ccf7a" stroke-width="1"/><path d="M4.3 3.3 L7.7 5.5 L4.3 7.7Z" fill="none" stroke="#8ccf7a" stroke-width="0.9"/></svg>下推后审核销售退货回传(单据转换)-测试<svg width="10" height="10" viewBox="0 0 10 10" style="display:inline-block;vertical-align:-1px;margin-left:6px"><rect x="0.5" y="0.5" width="9" height="9" rx="1" fill="none" stroke="#5c6c8a" stroke-width="1"/><path d="M3.2 0.5V9.5 M6.8 0.5V9.5 M0.5 5H9.5 M0.5 2.7H3.2 M0.5 7.3H3.2 M6.8 2.7H9.5 M6.8 7.3H9.5" stroke="#4f6a90" stroke-width="0.9"/></svg></div>
<div class="ab" style="left:375px;top:458.5px;width:48px;height:20px;border:1px solid #e9e9eb;border-radius:4px;background:#f4f4f5;color:#909399;font-size:12px;line-height:18px;padding-left:5px">空闲的</div>
<div class="t" style="left:507px;top:457.5px;font-size:14px;color:#606266">轻易云集成平台<svg width="12" height="12" viewBox="0 0 12 12" style="display:inline-block;vertical-align:-1px;margin-left:6px"><circle cx="6" cy="6" r="6" fill="#4b4d52"/><path d="M6.6 2.2 a0.9 0.9 0 1 0 0.01 0Z" fill="#fff"/><path d="M5.6 4.8 H7.2 L6.3 9.6 H4.9Z" fill="#fff"/></svg></div>
<div class="t" style="left:695px;top:457.5px;font-size:14px;color:#606266">金蝶云星空<svg width="12" height="12" viewBox="0 0 12 12" style="display:inline-block;vertical-align:-1px;margin-left:6px"><circle cx="6" cy="6" r="6" fill="#4b4d52"/><path d="M6.6 2.2 a0.9 0.9 0 1 0 0.01 0Z" fill="#fff"/><path d="M5.6 4.8 H7.2 L6.3 9.6 H4.9Z" fill="#fff"/></svg></div>
<div class="t" style="left:883px;top:458.5px;font-size:14px;color:#909399">设置分组</div>
<div class="t" style="left:1016px;top:458.5px;font-size:12px;color:#606266">*/2 * * * *</div>
<div class="t" style="left:1149px;top:458.5px;font-size:12px;color:#606266">* * * * *</div>
<div class="t" style="left:1282px;top:458.5px;font-size:12px;color:#606266">admin</div>
<div class="t" style="left:1382px;top:458.5px;font-size:12px;color:#606266">0</div>
<div class="t" style="left:1459px;top:458.5px;font-size:12px;color:#606266">asyn-asyn</div>
<div class="t" style="left:1548px;top:458.5px;font-size:12px;color:#606266">0</div>
<div class="t" style="left:1647px;top:458.5px;font-size:12px;color:#606266">0</div>
<div class="ab" style="left:11px;top:513px;width:14px;height:14px;border:1px solid #dcdcdc;border-radius:1px;background:#fff"></div>
<div class="t" style="left:53px;top:510.5px;font-size:12px;color:#2a6ad8"><svg width="11" height="11" viewBox="0 0 11 11" style="display:inline-block;vertical-align:-1px;margin-right:6px"><circle cx="5.5" cy="5.5" r="4.8" fill="none" stroke="#8ccf7a" stroke-width="1"/><path d="M4.3 3.3 L7.7 5.5 L4.3 7.7Z" fill="none" stroke="#8ccf7a" stroke-width="0.9"/></svg>销售退货回传(单据转换)-测试通过<svg width="10" height="10" viewBox="0 0 10 10" style="display:inline-block;vertical-align:-1px;margin-left:6px"><rect x="0.5" y="0.5" width="9" height="9" rx="1" fill="none" stroke="#5c6c8a" stroke-width="1"/><path d="M3.2 0.5V9.5 M6.8 0.5V9.5 M0.5 5H9.5 M0.5 2.7H3.2 M0.5 7.3H3.2 M6.8 2.7H9.5 M6.8 7.3H9.5" stroke="#4f6a90" stroke-width="0.9"/></svg></div>
<div class="ab" style="left:375px;top:510.5px;width:48px;height:20px;border:1px solid #e9e9eb;border-radius:4px;background:#f4f4f5;color:#909399;font-size:12px;line-height:18px;padding-left:5px">空闲的</div>
<div class="t" style="left:507px;top:509.5px;font-size:14px;color:#606266">赛意SMOM<svg width="12" height="12" viewBox="0 0 12 12" style="display:inline-block;vertical-align:-1px;margin-left:6px"><circle cx="6" cy="6" r="6" fill="#4b4d52"/><path d="M6.6 2.2 a0.9 0.9 0 1 0 0.01 0Z" fill="#fff"/><path d="M5.6 4.8 H7.2 L6.3 9.6 H4.9Z" fill="#fff"/></svg></div>
<div class="t" style="left:695px;top:509.5px;font-size:14px;color:#606266">金蝶云星空<svg width="12" height="12" viewBox="0 0 12 12" style="display:inline-block;vertical-align:-1px;margin-left:6px"><circle cx="6" cy="6" r="6" fill="#4b4d52"/><path d="M6.6 2.2 a0.9 0.9 0 1 0 0.01 0Z" fill="#fff"/><path d="M5.6 4.8 H7.2 L6.3 9.6 H4.9Z" fill="#fff"/></svg></div>
<div class="ab" style="left:883px;top:497.5px;font-size:14px;line-height:23px;color:#1890ff;white-space:nowrap">赛意执行完成回传<br>金蝶</div>
<div class="t" style="left:1016px;top:510.5px;font-size:12px;color:#606266">*/2 * * * *</div>
<div class="t" style="left:1149px;top:510.5px;font-size:12px;color:#606266">* * * * *</div>
<div class="t" style="left:1282px;top:510.5px;font-size:12px;color:#606266">admin</div>
<div class="t" style="left:1382px;top:510.5px;font-size:12px;color:#606266">0</div>
<div class="t" style="left:1459px;top:510.5px;font-size:12px;color:#606266">asyn-asyn</div>
<div class="t" style="left:1548px;top:510.5px;font-size:12px;color:#606266">0</div>
<div class="t" style="left:1647px;top:510.5px;font-size:12px;color:#606266">0</div>
<div class="ab" style="left:11px;top:565px;width:14px;height:14px;border:1px solid #dcdcdc;border-radius:1px;background:#fff"></div>
<div class="t" style="left:53px;top:562.5px;font-size:12px;color:#2a6ad8"><svg width="11" height="11" viewBox="0 0 11 11" style="display:inline-block;vertical-align:-1px;margin-right:6px"><circle cx="5.5" cy="5.5" r="4.8" fill="none" stroke="#e0a78a" stroke-width="1"/><rect x="3.8" y="3.9" width="3.4" height="3.2" fill="#f4c6bf"/></svg>20230802测试账套测试其他出库单<svg width="10" height="10" viewBox="0 0 10 10" style="display:inline-block;vertical-align:-1px;margin-left:6px"><rect x="0.5" y="0.5" width="9" height="9" rx="1" fill="none" stroke="#5c6c8a" stroke-width="1"/><path d="M3.2 0.5V9.5 M6.8 0.5V9.5 M0.5 5H9.5 M0.5 2.7H3.2 M0.5 7.3H3.2 M6.8 2.7H9.5 M6.8 7.3H9.5" stroke="#4f6a90" stroke-width="0.9"/></svg></div>
<div class="ab" style="left:375px;top:562.5px;width:48px;height:20px;border:1px solid #e9e9eb;border-radius:4px;background:#f4f4f5;color:#909399;font-size:12px;line-height:18px;padding-left:5px">空闲的</div>
<div class="t" style="left:507px;top:561.5px;font-size:14px;color:#606266">金蝶云星空<svg width="12" height="12" viewBox="0 0 12 12" style="display:inline-block;vertical-align:-1px;margin-left:6px"><circle cx="6" cy="6" r="6" fill="#4b4d52"/><path d="M6.6 2.2 a0.9 0.9 0 1 0 0.01 0Z" fill="#fff"/><path d="M5.6 4.8 H7.2 L6.3 9.6 H4.9Z" fill="#fff"/></svg></div>
<div class="t" style="left:695px;top:561.5px;font-size:14px;color:#606266">赛意SMOM<svg width="12" height="12" viewBox="0 0 12 12" style="display:inline-block;vertical-align:-1px;margin-left:6px"><circle cx="6" cy="6" r="6" fill="#4b4d52"/><path d="M6.6 2.2 a0.9 0.9 0 1 0 0.01 0Z" fill="#fff"/><path d="M5.6 4.8 H7.2 L6.3 9.6 H4.9Z" fill="#fff"/></svg></div>
<div class="t" style="left:883px;top:562.5px;font-size:14px;color:#909399">设置分组</div>
<div class="t" style="left:1016px;top:562.5px;font-size:12px;color:#606266">3 2 * * *</div>
<div class="t" style="left:1149px;top:562.5px;font-size:12px;color:#606266">23 2 * * *</div>
<div class="t" style="left:1282px;top:562.5px;font-size:12px;color:#606266">admin</div>
<div class="t" style="left:1382px;top:562.5px;font-size:12px;color:#606266">0</div>
<div class="t" style="left:1459px;top:562.5px;font-size:12px;color:#606266">asyn-asyn</div>
<div class="t" style="left:1548px;top:562.5px;font-size:12px;color:#606266">0</div>
<div class="t" style="left:1647px;top:562.5px;font-size:12px;color:#606266">0</div>
</div>
<svg class="ab" style="left:309px;top:240px" width="10" height="12" viewBox="0 0 10 12"><path d="M5 0.5 L9.5 5 H0.5Z M0.5 7 H9.5 L5 11.5Z" fill="#c0c4cc"/></svg>
<svg class="ab" style="left:775px;top:240px" width="10" height="12" viewBox="0 0 10 12"><path d="M5 0.5 L9.5 5 H0.5Z M0.5 7 H9.5 L5 11.5Z" fill="#c0c4cc"/></svg>
<svg class="ab" style="left:975px;top:240px" width="10" height="12" viewBox="0 0 10 12"><path d="M5 0.5 L9.5 5 H0.5Z M0.5 7 H9.5 L5 11.5Z" fill="#c0c4cc"/></svg>
<svg class="ab" style="left:1151px;top:240px" width="10" height="12" viewBox="0 0 10 12"><path d="M5 0.5 L9.5 5 H0.5Z M0.5 7 H9.5 L5 11.5Z" fill="#c0c4cc"/></svg>
<svg class="ab" style="left:1335px;top:240px" width="10" height="12" viewBox="0 0 10 12"><path d="M5 0.5 L9.5 5 H0.5Z M0.5 7 H9.5 L5 11.5Z" fill="#c0c4cc"/></svg>
<svg class="ab" style="left:1462px;top:240px" width="10" height="12" viewBox="0 0 10 12"><path d="M5 0.5 L9.5 5 H0.5Z M0.5 7 H9.5 L5 11.5Z" fill="#c0c4cc"/></svg>
<svg class="ab" style="left:1538px;top:240px" width="10" height="12" viewBox="0 0 10 12"><path d="M5 0.5 L9.5 5 H0.5Z M0.5 7 H9.5 L5 11.5Z" fill="#c0c4cc"/></svg>
<svg class="ab" style="left:1828px;top:240px" width="10" height="12" viewBox="0 0 10 12"><path d="M5 0.5 L9.5 5 H0.5Z M0.5 7 H9.5 L5 11.5Z" fill="#c0c4cc"/></svg>
<div class="ab" style="left:1888px;top:273px;width:17px;height:554px;background:#f1f1f1"></div>
<div class="ab" style="left:1890px;top:290px;width:13px;height:266px;background:#c1c1c1"></div>
<svg class="ab" style="left:1892px;top:279px" width="9" height="5" viewBox="0 0 9 5"><path d="M0 5H9L4.5 0Z" fill="#a3a3a3"/></svg>
<svg class="ab" style="left:1892px;top:815px" width="9" height="5" viewBox="0 0 9 5"><path d="M0 0H9L4.5 5Z" fill="#505050"/></svg>
<div class="ab" style="left:225px;top:827px;width:1663px;height:17px;background:#f1f1f1"></div>
<div class="ab" style="left:243px;top:829px;width:1103px;height:13px;background:#c1c1c1"></div>
<svg class="ab" style="left:231px;top:831px" width="5" height="9" viewBox="0 0 5 9"><path d="M5 0V9L0 4.5Z" fill="#a3a3a3"/></svg>
<svg class="ab" style="left:1877px;top:831px" width="5" height="9" viewBox="0 0 5 9"><path d="M0 0V9L5 4.5Z" fill="#505050"/></svg>
<div class="ab" style="left:1888px;top:827px;width:17px;height:17px;background:#dcdcdc"></div>
<div class="ab" style="left:235px;top:846px;width:30px;height:28px;border-radius:2px;background:#f4f4f5"></div>
<svg class="ab" style="left:247px;top:855px" width="6" height="10" viewBox="0 0 6 10"><path d="M5 1 L1 5 L5 9" fill="none" stroke="#c0c4cc" stroke-width="1.3"/></svg>
<div class="ab" style="left:275px;top:846px;width:30px;height:28px;border-radius:2px;background:#1890ff;color:#fff;font-size:13px;font-weight:bold;line-height:27px;text-align:center">1</div>
<div class="ab" style="left:315px;top:846px;width:30px;height:28px;border-radius:2px;background:#f4f4f5;color:#606266;font-size:13px;font-weight:bold;line-height:27px;text-align:center">2</div>
<div class="ab" style="left:355px;top:846px;width:30px;height:28px;border-radius:2px;background:#f4f4f5;color:#606266;font-size:13px;font-weight:bold;line-height:27px;text-align:center">3</div>
<div class="ab" style="left:395px;top:846px;width:30px;height:28px;border-radius:2px;background:#f4f4f5;color:#606266;font-size:13px;font-weight:bold;line-height:27px;text-align:center">4</div>
<div class="ab" style="left:435px;top:846px;width:30px;height:28px;border-radius:2px;background:#f4f4f5;color:#606266;font-size:13px;font-weight:bold;line-height:27px;text-align:center">5</div>
<div class="ab" style="left:475px;top:846px;width:30px;height:28px;border-radius:2px;background:#f4f4f5;color:#606266;font-size:13px;font-weight:bold;line-height:27px;text-align:center">6</div>
<div class="ab" style="left:515px;top:846px;width:30px;height:28px;border-radius:2px;background:#f4f4f5;color:#606266;font-size:13px;font-weight:bold;line-height:27px;text-align:center">7</div>
<div class="ab" style="left:555px;top:846px;width:30px;height:28px;border-radius:2px;background:#f4f4f5"></div>
<svg class="ab" style="left:567px;top:855px" width="6" height="10" viewBox="0 0 6 10"><path d="M1 1 L5 5 L1 9" fill="none" stroke="#303133" stroke-width="1.3"/></svg>
<div class="ab" style="left:1610px;top:858px;font-size:25px;line-height:30px;color:#f2f2f2;text-shadow:1px 1px 0 #6a6a6a,2px 2px 1px rgba(0,0,0,.35)">掘金技术社区</div>
<div class="ab" style="left:1765px;top:859px;font-size:23px;line-height:30px;color:#f2f2f2;text-shadow:1px 1px 0 #6a6a6a,2px 2px 1px rgba(0,0,0,.35)">@</div>
<div class="ab" style="left:1796px;top:858px;font-size:25px;line-height:30px;color:#f2f2f2;text-shadow:1px 1px 0 #6a6a6a,2px 2px 1px rgba(0,0,0,.35)">立秋老师</div>
</body></html>
